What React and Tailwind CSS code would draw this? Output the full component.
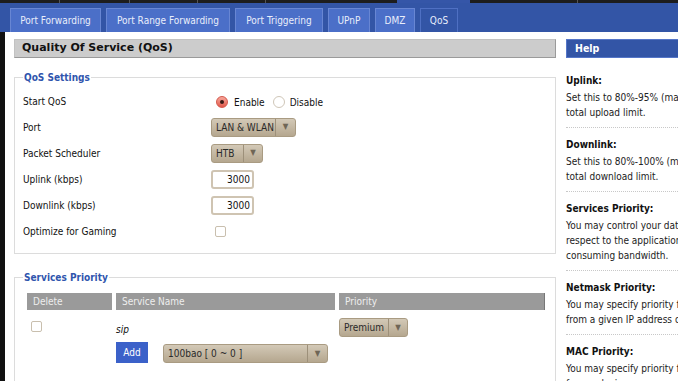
import React from 'react';

const font = { fontFamily: '"DejaVu Sans Condensed", "DejaVu Sans", Verdana, sans-serif' };

const tabs = [
  { label: 'Port Forwarding', w: 'w-[91px]' },
  { label: 'Port Range Forwarding', w: 'w-[124px]' },
  { label: 'Port Triggering', w: 'w-[88px]' },
  { label: 'UPnP', w: 'w-[42px]' },
  { label: 'DMZ', w: 'w-[40px]' },
  { label: 'QoS', w: 'w-[38px]', active: true },
];

const Select = ({ label, w, split }) => (
  <div className={`flex h-[19px] ${w} items-center rounded-[3px] border border-[#a99b82] bg-gradient-to-b from-[#d3c9b7] to-[#b5a78f] text-[10px] text-[#2a2a2a]`}>
    <div className={`${split} h-full flex items-center pl-[4px] border-r border-[#9d907a] overflow-hidden whitespace-nowrap`}>{label}</div>
    <div className="flex-1 flex items-center justify-center text-[8px] text-[#6f6656]">▼</div>
  </div>
);

const Input = ({ value }) => (
  <div className="h-[19px] w-[43px] rounded-[3px] border-2 border-[#cfc4b2] bg-white text-right pr-[2px] text-[10px] leading-[15px] text-[#111]">
    {value}
  </div>
);

const Check = () => <div className="h-[11px] w-[11px] rounded-[2px] border border-[#c9bfae] bg-white" />;

const Row = ({ label, children }) => (
  <div className="flex h-[26px] items-center">
    <div className="w-[188px] text-[10px] text-[#111]">{label}</div>
    <div className="flex items-center">{children}</div>
  </div>
);

const helpItems = [
  { title: 'Uplink:', lines: ['Set this to 80%-95% (max) of your', 'total upload limit.'] },
  { title: 'Downlink:', lines: ['Set this to 80%-100% (max) of your', 'total download limit.'] },
  { title: 'Services Priority:', lines: ['You may control your data rate with', 'respect to the application that is', 'consuming bandwidth.'] },
  { title: 'Netmask Priority:', lines: ['You may specify priority for all traffic', 'from a given IP address or IP range.'] },
  { title: 'MAC Priority:', lines: ['You may specify priority for all traffic', 'from a device on your network.'] },
];

export default function App() {
  return (
    <div className="w-[678px] h-[381px] overflow-hidden bg-white" style={font}>
      {/* upper tab strip */}
      <div className="flex h-[3px] bg-[#1d1d1d]">
        <div className="w-[60px] shrink-0 border-r border-[#555]" />
        <div className="w-[70px] shrink-0 border-r border-[#555]" />
        <div className="w-[68px] shrink-0 border-r border-[#555]" />
        <div className="w-[68px] shrink-0 border-r border-[#555]" />
        <div className="w-[131px] shrink-0" />
        <div className="w-[73px] shrink-0 bg-[#3556a8]" />
        <div className="w-[108px] shrink-0 border-r border-[#555]" />
      </div>

      {/* nav tabs */}
      <div className="flex h-[29px] items-end gap-[5px] bg-[#3355a6] pl-[10px]">
        {tabs.map((t) => (
          <div
            key={t.label}
            className={`${t.w} h-[24px] flex items-center justify-center border border-b-0 text-[10px] text-[#e9eefb] whitespace-nowrap ${t.active ? 'bg-[#3355a6] border-[#4f70c3]' : 'bg-[#4b6fc8] border-[#6886d3]'}`}
          >
            {t.label}
          </div>
        ))}
      </div>

      <div className="flex h-[349px]">
        <div className="w-[5px] shrink-0 bg-[#111]" />
        <div className="flex flex-1 gap-[10px] pl-[9px] pt-[7px]">
          {/* main column */}
          <div className="w-[542px] shrink-0">
            <div className="h-[19px] flex items-center border border-[#c2c2c2] border-b-[#9a9a9a] border-r-[#9a9a9a] bg-[#cccccc] pl-[7px] text-[11px] font-bold text-[#111] font-['DejaVu_Sans',sans-serif]">
              Quality Of Service (QoS)
            </div>

            <fieldset className="mt-[12px] h-[184px] border border-[#dcdcdc] px-[8px]">
              <legend className="px-[1px] text-[10px] font-bold text-[#2f55ad]">QoS Settings</legend>
              <div className="pt-[3px]">
                <Row label="Start QoS">
                  <div className="ml-[5px] flex items-center gap-[6px] text-[10px] text-[#111] pt-[2px]">
                    <span className="flex h-[12px] w-[12px] items-center justify-center rounded-full border border-[#d4574a] bg-gradient-to-b from-[#f7a79c] to-[#e0574a]">
                      <span className="h-[4px] w-[4px] rounded-full bg-[#3a1a16]" />
                    </span>
                    <span>Enable</span>
                    <span className="ml-[2px] h-[12px] w-[12px] rounded-full border border-[#cfc6b8] bg-white" />
                    <span className="-ml-[1px]">Disable</span>
                  </div>
                </Row>
                <Row label="Port">
                  <Select label="LAN & WLAN" w="w-[85px]" split="w-[64px]" />
                </Row>
                <Row label="Packet Scheduler">
                  <Select label="HTB" w="w-[52px]" split="w-[32px]" />
                </Row>
                <Row label="Uplink (kbps)">
                  <Input value="3000" />
                </Row>
                <Row label="Downlink (kbps)">
                  <Input value="3000" />
                </Row>
                <Row label="Optimize for Gaming">
                  <div className="ml-[4px]"><Check /></div>
                </Row>
              </div>
            </fieldset>

            <fieldset className="mt-[16px] h-[120px] border border-[#dcdcdc] pl-[12px] pr-[10px]">
              <legend className="ml-[-4px] px-[1px] text-[10px] font-bold text-[#2f55ad]">Services Priority</legend>
              <div className="mt-[8px] flex gap-[4px] text-[10px] text-[#eeeeee]">
                <div className="h-[17px] w-[85px] bg-[#9a9a9a] pl-[6px] leading-[17px]">Delete</div>
                <div className="h-[17px] w-[219px] bg-[#9a9a9a] pl-[6px] leading-[17px]">Service Name</div>
                <div className="h-[17px] flex-1 bg-[#9a9a9a] pl-[6px] leading-[17px] border-r border-[#777]">Priority</div>
              </div>
              <div className="mt-[8px] flex gap-[4px]">
                <div className="w-[85px] pl-[4px] pt-[3px]"><Check /></div>
                <div className="w-[219px] pt-[4px] text-[10px] italic text-[#111]">sip</div>
                <div className="flex-1"><Select label="Premium" w="w-[69px]" split="w-[49px]" /></div>
              </div>
              <div className="mt-[5px] flex items-start">
                <div className="ml-[89px] flex h-[21px] w-[32px] items-center justify-center bg-[#3b61c9] text-[10px] text-white">Add</div>
                <div className="ml-[15px] mt-[2px]"><Select label="100bao [ 0 ~ 0 ]" w="w-[165px]" split="w-[144px]" /></div>
              </div>
            </fieldset>
          </div>

          {/* help column */}
          <div className="flex-1 min-w-[150px]">
            <div className="h-[19px] flex items-center border border-[#5576c8] bg-[#3355a6] pl-[8px] text-[10.5px] font-bold text-white">
              Help
            </div>
            <div className="pt-[6px]">
              {helpItems.map((h) => (
                <div key={h.title} className="border-b border-dotted border-[#c8c8c8] pt-[9px] pb-[7px] whitespace-nowrap">
                  <div className="text-[10px] leading-[15px] font-bold text-[#111] mb-[2px]">{h.title}</div>
                  {h.lines.map((l) => (
                    <div key={l} className="text-[10px] leading-[15px] text-[#222]">{l}</div>
                  ))}
                </div>
              ))}
            </div>
          </div>
        </div>
      </div>
    </div>
  );
}
